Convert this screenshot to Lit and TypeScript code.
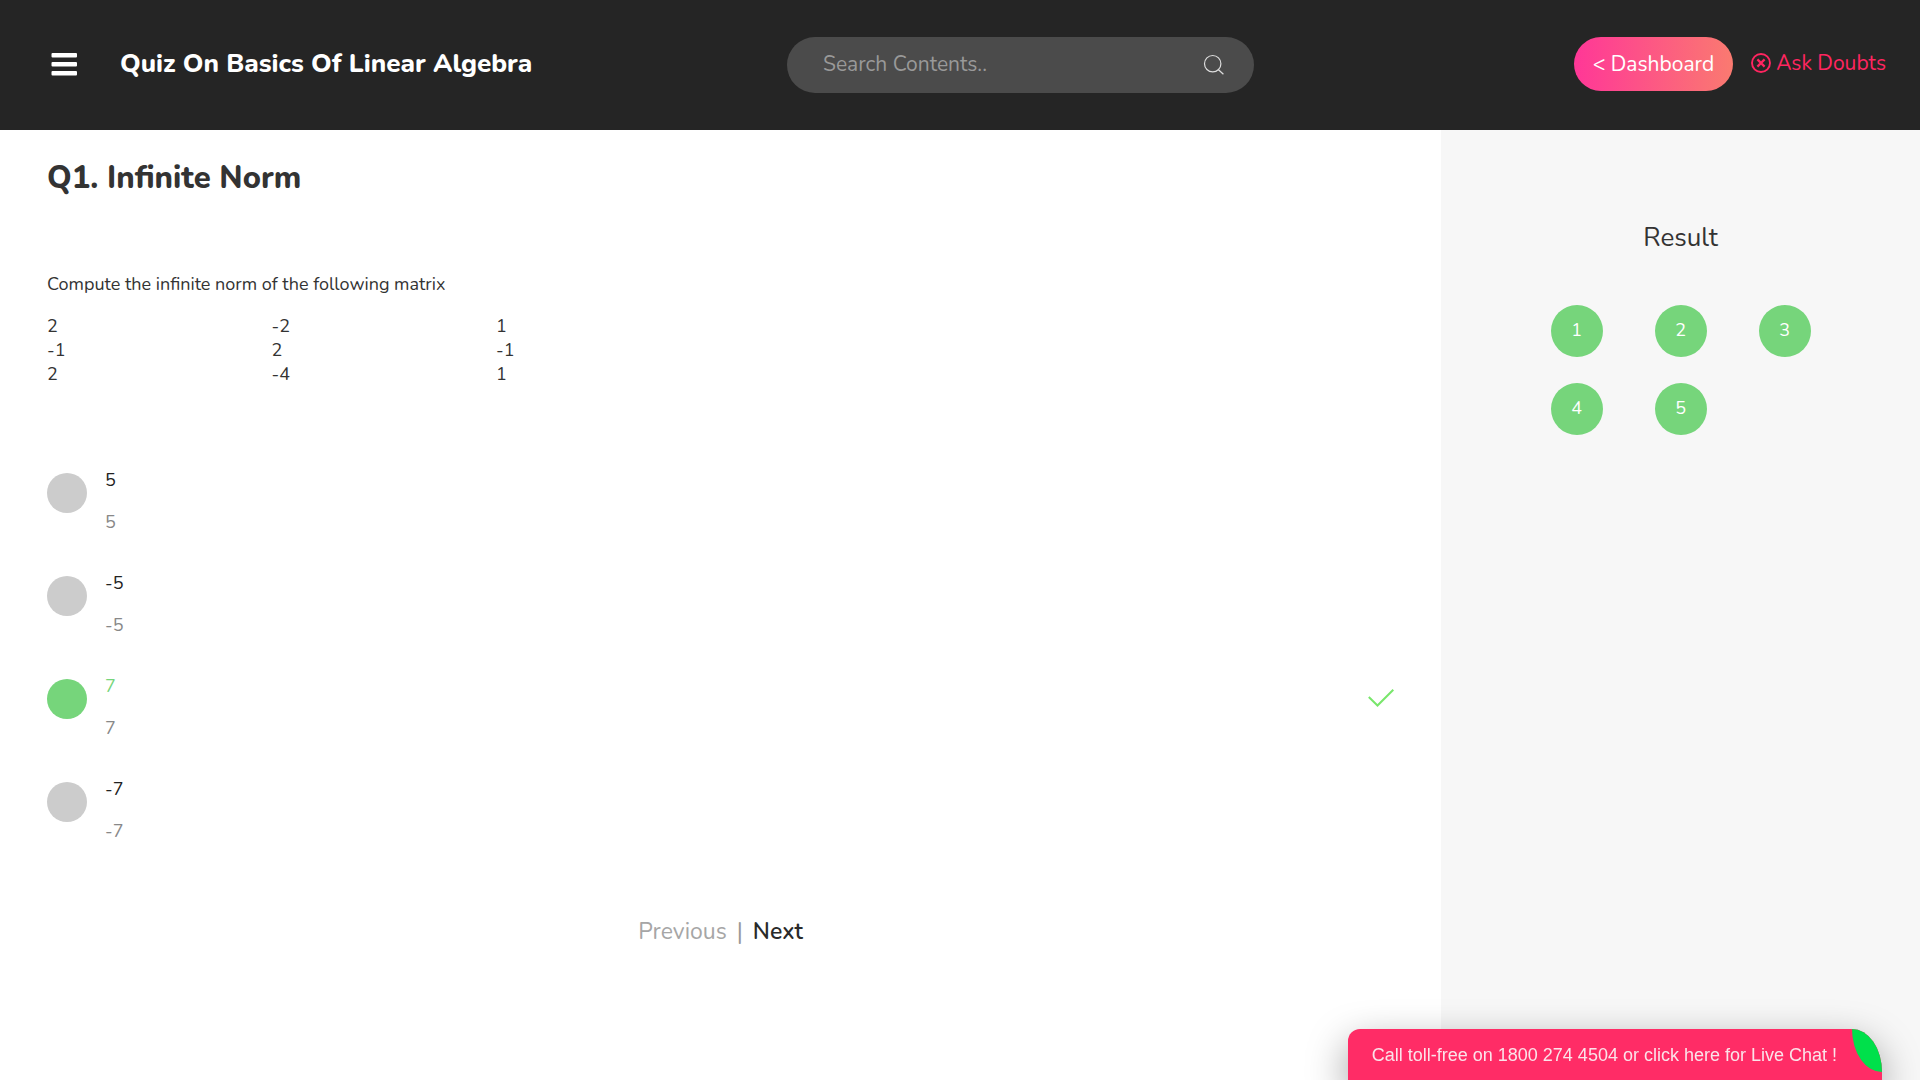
import { LitElement, html, css, svg } from "lit";
import { customElement, state } from "lit/decorators.js";

const MATRIX = [
  ["2", "-2", "1"],
  ["-1", "2", "-1"],
  ["2", "-4", "1"],
];
const OPTIONS = ["5", "-5", "7", "-7"];
const QUESTIONS = [1, 2, 3, 4, 5];

const menuIcon = svg`
  <rect x="0.5" y="0" width="25.5" height="4.4" rx="1" fill="#fff"/>
  <rect x="0.5" y="9" width="25.5" height="4.4" rx="1" fill="#fff"/>
  <rect x="0.5" y="18" width="25.5" height="4.4" rx="1" fill="#fff"/>`;

@customElement("quiz-header")
class QuizHeader extends LitElement {
  static styles = css`
    :host {
      display: block;
      background: #252525;
    }
    .bar {
      display: grid;
      grid-template-columns: 787fr 467fr 666fr;
      align-items: center;
      height: 130px;
    }
    .left {
      display: flex;
      align-items: center;
      gap: 43px;
      padding-left: 51px;
      padding-bottom: 2px;
    }
    .menu {
      display: flex;
      border: 0;
      padding: 0;
      background: none;
    }
    h1 {
      margin: 0;
      color: #fff;
      font-size: 26px;
      line-height: 36px;
      font-weight: 800;
      white-space: nowrap;
    }
    .search {
      display: flex;
      align-items: center;
      height: 56px;
      box-sizing: border-box;
      padding: 0 29px 0 36px;
      border-radius: 28px;
      background: #4b4b4b;
    }
    .search input {
      flex: 1;
      min-width: 0;
      border: 0;
      padding: 0 0 2px;
      outline: 0;
      background: none;
      color: #ddd;
      font: inherit;
      font-size: 21px;
    }
    .search input::placeholder {
      color: #999;
      opacity: 1;
    }
    .search button {
      display: flex;
      border: 0;
      padding: 0;
      background: none;
    }
    .right {
      display: flex;
      justify-content: flex-end;
      align-items: center;
      gap: 18px;
      padding-right: 34px;
      padding-bottom: 2px;
      font-size: 21px;
      white-space: nowrap;
    }
    .dashboard {
      padding: 0 19px;
      border-radius: 27px;
      background: linear-gradient(90deg, #ff3797, #fa7a70);
      color: #fff;
      line-height: 54px;
      text-decoration: none;
    }
    .doubts {
      display: flex;
      align-items: center;
      gap: 5px;
      border: 0;
      padding: 0 0 2px;
      background: none;
      color: #ff2560;
      font: inherit;
    }
  `;

  render() {
    return html`
      <header class="bar">
        <div class="left">
          <button class="menu" aria-label="Menu">
            <svg width="26" height="23" viewBox="0 0 26 23">${menuIcon}</svg>
          </button>
          <h1>Quiz On Basics Of Linear Algebra</h1>
        </div>
        <form class="search" role="search" @submit=${(e: Event) => e.preventDefault()}>
          <input type="text" aria-label="Search Contents" placeholder="Search Contents.." />
          <button aria-label="Search">
            <svg width="22" height="22" viewBox="0 0 22 22" fill="none" stroke="#ddd" stroke-width="1.2">
              <circle cx="9.7" cy="9.7" r="8.2" />
              <path d="M15.2 15.5l5.2 4.8" />
            </svg>
          </button>
        </form>
        <nav class="right">
          <a class="dashboard" href="#dashboard">&lt; Dashboard</a>
          <button class="doubts">
            <svg width="20" height="20" viewBox="0 0 20 20" fill="none" stroke="currentColor">
              <circle cx="10" cy="10" r="9" stroke-width="1.9" />
              <path d="M6.4 6.4l7.2 7.2M13.6 6.4l-7.2 7.2" stroke-width="2.2" />
            </svg>
            Ask Doubts
          </button>
        </nav>
      </header>
    `;
  }
}

@customElement("quiz-question")
class QuizQuestion extends LitElement {
  @state() private selected = "7";

  static styles = css`
    :host {
      display: block;
    }
    .question {
      padding: 27px 47px 40px;
      font-size: 18px;
      line-height: 24px;
      color: #333;
    }
    h2 {
      margin: 0;
      font-size: 31px;
      line-height: 42px;
      font-weight: 800;
    }
    .prompt {
      margin: 73px 0 18px;
    }
    table {
      table-layout: fixed;
      width: 50%;
      border-collapse: collapse;
    }
    td {
      padding: 0;
    }
    .options {
      display: grid;
      gap: 37px;
      margin: 82px 0 0;
      padding: 0;
      border: 0;
    }
    .option {
      display: flex;
      align-items: flex-start;
      gap: 18px;
    }
    .option input {
      appearance: none;
      flex: none;
      width: 40px;
      height: 40px;
      margin: 5px 0 0;
      border-radius: 50%;
      background: #ccc;
    }
    .option input:checked {
      background: #76d57b;
    }
    .text {
      display: grid;
      flex: 1;
      gap: 18px;
      color: #222;
    }
    .detail {
      color: #888;
    }
    input:checked + .text .answer {
      color: #76d57b;
    }
    .tick {
      margin-top: 14px;
    }
    .pager {
      display: flex;
      justify-content: center;
      align-items: center;
      gap: 10px;
      margin-top: 73px;
      color: #999;
      font-size: 23px;
      line-height: 32px;
    }
    .pager button {
      border: 0;
      padding: 0;
      background: none;
      color: #2a2a2a;
      font: inherit;
      font-weight: 600;
    }
    .pager button:disabled {
      color: #a6a6a6;
      font-weight: 400;
    }
  `;

  render() {
    return html`
      <main class="question">
        <h2>Q1. Infinite Norm</h2>
        <p class="prompt">Compute the infinite norm of the following matrix</p>
        <table>
          <tbody>
            ${MATRIX.map((row) => html`<tr>${row.map((n) => html`<td>${n}</td>`)}</tr>`)}
          </tbody>
        </table>
        <fieldset class="options" aria-label="Answers">
          ${OPTIONS.map(
            (o) => html`
              <label class="option">
                <input
                  type="radio"
                  name="answer"
                  .checked=${this.selected === o}
                  @change=${() => (this.selected = o)}
                />
                <span class="text">
                  <span class="answer">${o}</span>
                  <span class="detail">${o}</span>
                </span>
                ${o === "7"
                  ? html`<svg class="tick" width="26" height="20" viewBox="0 0 26 20" fill="none" stroke="#78e66b" stroke-width="2">
                      <path d="M.8 9l8.7 8.5L25.3 1.7" />
                    </svg>`
                  : ""}
              </label>
            `
          )}
        </fieldset>
        <nav class="pager">
          <button disabled>Previous</button>
          <span>|</span>
          <button>Next</button>
        </nav>
      </main>
    `;
  }
}

@customElement("quiz-result")
class QuizResult extends LitElement {
  static styles = css`
    :host {
      display: block;
      background: #f7f7f7;
    }
    .result {
      display: flex;
      flex-direction: column;
      align-items: center;
      gap: 49px;
      padding-top: 90px;
    }
    h3 {
      margin: 0;
      color: #333;
      font-size: 26px;
      line-height: 36px;
      font-weight: 400;
    }
    .grid {
      display: grid;
      grid-template-columns: repeat(3, 52px);
      gap: 26px 52px;
    }
    .grid button {
      height: 52px;
      border: 0;
      padding: 0 0 2px;
      border-radius: 50%;
      background: #76d57b;
      color: #fff;
      font: inherit;
      font-size: 18px;
    }
  `;

  render() {
    return html`
      <aside class="result">
        <h3>Result</h3>
        <div class="grid">
          ${QUESTIONS.map((n) => html`<button aria-label="Question ${n}">${n}</button>`)}
        </div>
      </aside>
    `;
  }
}

@customElement("app-root")
class AppRoot extends LitElement {
  static styles = css`
    :host {
      display: flex;
      flex-direction: column;
      min-height: 100vh;
      background: #fff;
      font-family: Nunito, Lato, sans-serif;
    }
    .body {
      display: grid;
      grid-template-columns: 301fr 100fr;
      flex: 1;
    }
    .chat {
      position: fixed;
      right: 38px;
      bottom: 0;
      display: flex;
      align-items: flex-start;
      gap: 15px;
      height: 51px;
      border: 0;
      padding: 0 0 0 24px;
      border-radius: 12px 30px 0 0 / 12px 43px 0 0;
      background: #ff2c66;
      box-shadow: 0 15px 40px rgba(0, 0, 0, 0.4);
      color: #fbe3e9;
      font-family: "Liberation Sans", Arial, sans-serif;
      font-size: 18px;
      line-height: 53px;
    }
    .leaf {
      width: 30px;
      height: 43px;
      border-radius: 0 100% 0 100%;
      background: #00e04b;
    }
  `;

  render() {
    return html`
      <quiz-header></quiz-header>
      <div class="body">
        <quiz-question></quiz-question>
        <quiz-result></quiz-result>
      </div>
      <button class="chat">
        <span>Call toll-free on 1800 274 4504 or click here for Live Chat !</span>
        <span class="leaf"></span>
      </button>
    `;
  }
}
